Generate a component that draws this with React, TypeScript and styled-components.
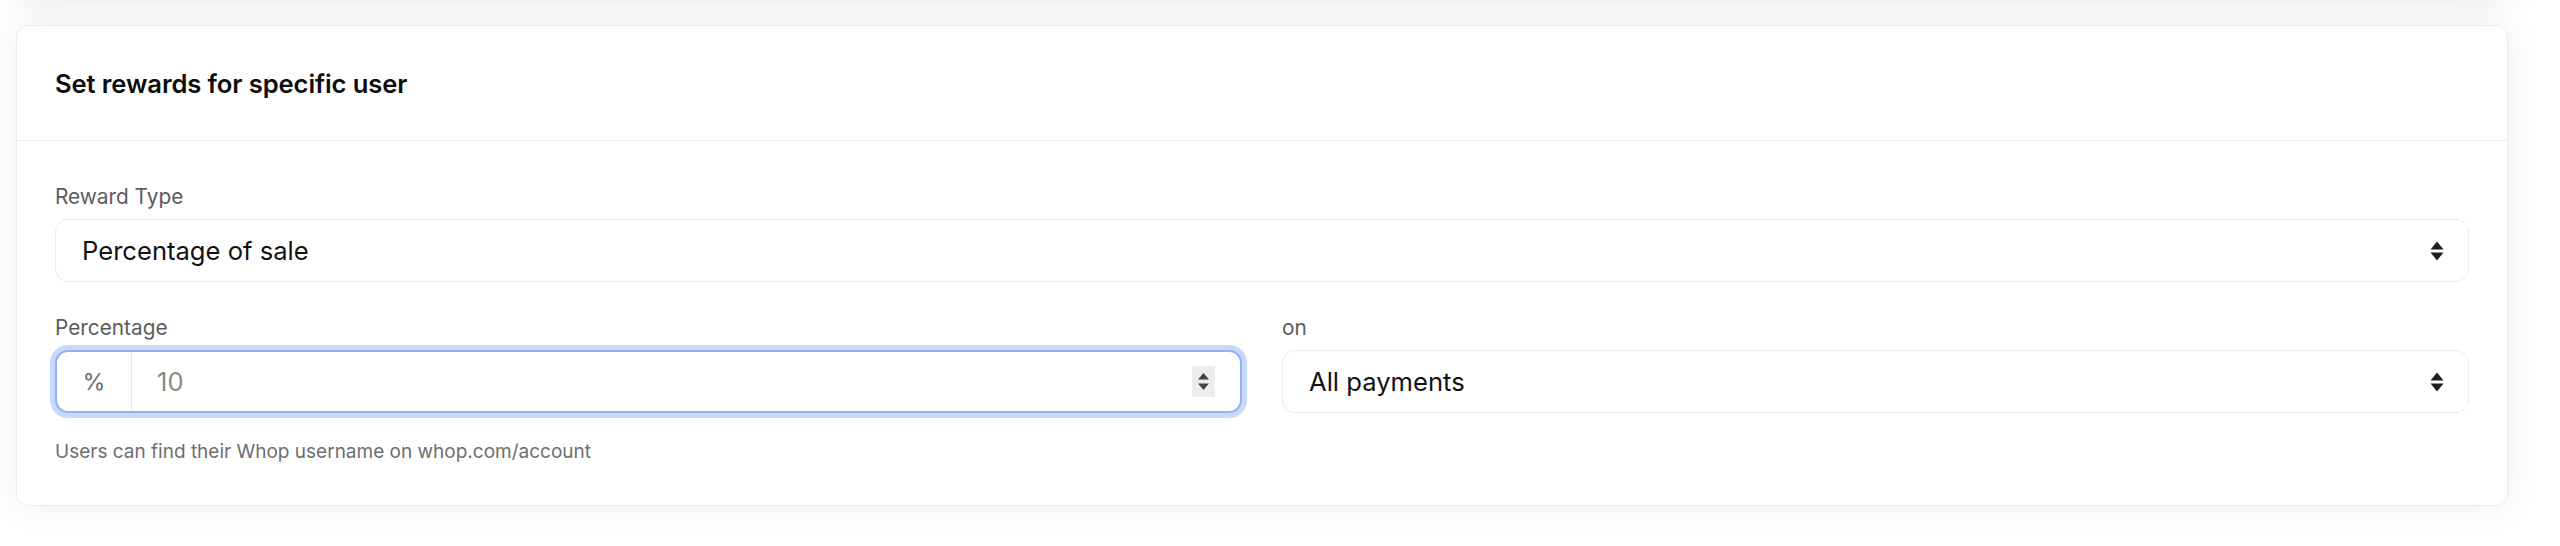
import React from "react";
import styled, { createGlobalStyle } from "styled-components";

const GlobalStyle = createGlobalStyle`
  * { box-sizing: border-box; }
  html, body { margin: 0; padding: 0; background: #ffffff; }
  body {
    font-family: Inter, "Noto Sans", "Liberation Sans", sans-serif;
    color: #111111;
    overflow: hidden;
    -webkit-font-smoothing: antialiased;
  }
`;

const Page = styled.div`
  display: flex;
  flex-direction: column;
  gap: 30px;
  padding: 0 52px 43px 16px;
`;

const PrevCard = styled.div`
  height: 40px;
  margin-top: -45px;
  background: #ffffff;
  border-radius: 13px;
  box-shadow: 0 0 40px rgba(0, 0, 0, 0.12);
`;

const Card = styled.section`
  background: #ffffff;
  border: 1px solid #ececec;
  border-radius: 13px;
  box-shadow: 0 0 36px rgba(0, 0, 0, 0.07);
  overflow: hidden;
`;

const CardHeader = styled.header`
  height: 115px;
  display: flex;
  align-items: center;
  padding: 0 38px;
  border-bottom: 1px solid #ececec;
`;

const Title = styled.h2`
  margin: 0;
  font-size: 25.6px;
  font-weight: 600;
  letter-spacing: -0.1px;
  color: #0d0d0d;
`;

const CardBody = styled.div`
  display: flex;
  flex-direction: column;
  padding: 40px 38px 39px;
`;

const Row = styled.div`
  display: grid;
  grid-template-columns: 1fr 1fr;
  column-gap: 40px;
  margin-top: 30px;
`;

const Field = styled.div`
  display: flex;
  flex-direction: column;
  gap: 6px;
`;

const Label = styled.label`
  font-size: 20.8px;
  line-height: 32px;
  color: #5c5c5c;
`;

const SelectBox = styled.div`
  height: 63px;
  display: flex;
  align-items: center;
  justify-content: space-between;
  padding: 0 24px 0 26px;
  border: 1px solid #ebebeb;
  border-radius: 13px;
  background: #ffffff;
  font-size: 25.6px;
  color: #121212;
`;

const InputBox = styled.div<{ $focused?: boolean }>`
  height: 63px;
  display: flex;
  align-items: stretch;
  border: 2px solid ${(p) => (p.$focused ? "#8fb1f1" : "#ebebeb")};
  border-radius: 13px;
  box-shadow: ${(p) => (p.$focused ? "0 0 0 5px #c8d9fb" : "none")};
  background: #ffffff;
  overflow: hidden;
`;

const Prefix = styled.span`
  width: 75px;
  flex: none;
  display: flex;
  align-items: center;
  justify-content: center;
  border-right: 1px solid #e8e8e8;
  font-size: 23px;
  color: #6a6a6a;
`;

const Value = styled.span`
  flex: 1;
  display: flex;
  align-items: center;
  padding-left: 25px;
  font-size: 25.6px;
  color: #8a8a8a;
`;

const SpinnerWrap = styled.span`
  display: flex;
  align-items: center;
  padding-right: 25px;
`;

const Spinner = styled.span`
  width: 23px;
  height: 31px;
  display: flex;
  align-items: center;
  justify-content: center;
  background: #ededed;
`;

const Helper = styled.p`
  margin: 25px 0 0;
  font-size: 19px;
  line-height: 28px;
  color: #6e6e6e;
`;

const SelectArrows = () => (
  <svg width="14" height="20" viewBox="0 0 14 20" aria-hidden="true">
    <path d="M7 0.5 L13.5 8.6 H0.5 Z" fill="#1e1e1e" />
    <path d="M7 19.5 L13.5 11.4 H0.5 Z" fill="#1e1e1e" />
  </svg>
);

const SpinArrows = () => (
  <svg width="13" height="21" viewBox="0 0 13 21" aria-hidden="true">
    <path d="M6.5 2 L12 8.5 H1 Z" fill="#444444" />
    <path d="M6.5 19 L12 12.5 H1 Z" fill="#444444" />
  </svg>
);

export default function App() {
  return (
    <>
      <GlobalStyle />
      <Page>
        <PrevCard />
        <Card>
          <CardHeader>
            <Title>Set rewards for specific user</Title>
          </CardHeader>
          <CardBody>
            <Field>
              <Label>Reward Type</Label>
              <SelectBox>
                <span>Percentage of sale</span>
                <SelectArrows />
              </SelectBox>
            </Field>
            <Row>
              <Field>
                <Label>Percentage</Label>
                <InputBox $focused>
                  <Prefix>%</Prefix>
                  <Value>10</Value>
                  <SpinnerWrap>
                    <Spinner>
                      <SpinArrows />
                    </Spinner>
                  </SpinnerWrap>
                </InputBox>
              </Field>
              <Field>
                <Label>on</Label>
                <SelectBox>
                  <span>All payments</span>
                  <SelectArrows />
                </SelectBox>
              </Field>
            </Row>
            <Helper>Users can find their Whop username on whop.com/account</Helper>
          </CardBody>
        </Card>
      </Page>
    </>
  );
}
